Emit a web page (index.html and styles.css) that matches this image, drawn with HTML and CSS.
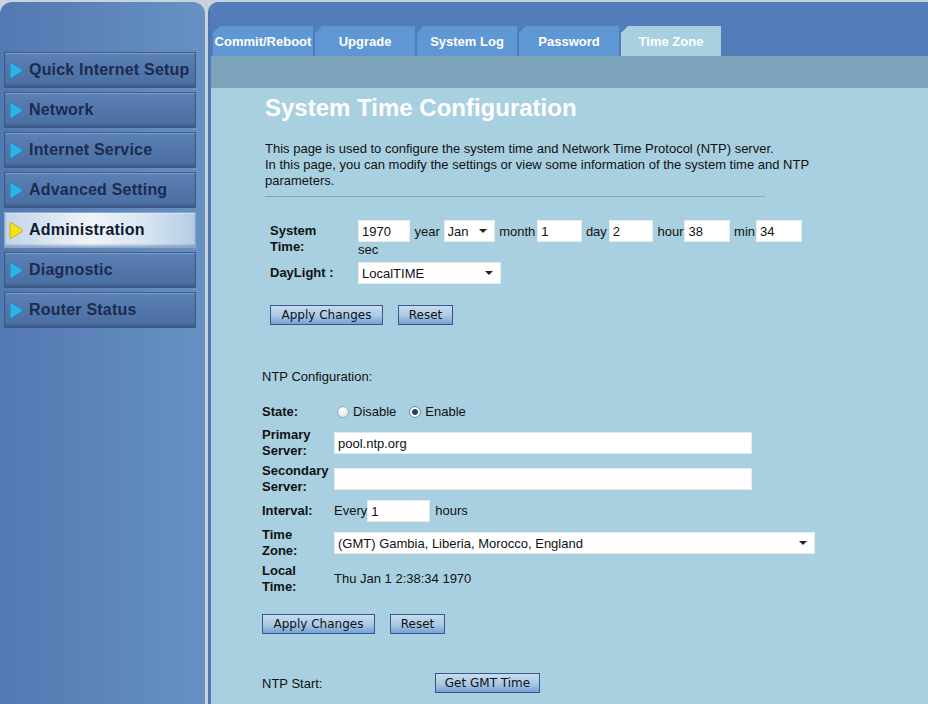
FILE: index.html
```html
<!DOCTYPE html>
<html lang="en">
<head>
  <meta charset="UTF-8">
  <title>System Time Configuration</title>
  <link rel="stylesheet" href="styles.css">
</head>
<body>
  <div class="page">
    <aside class="sidebar">
      <ul class="menu">
        <li class="menu-item"><svg class="arrow" viewBox="0 0 14 17"><path d="M1 1.5 Q1 0 2.4 0.8 L13 7.4 Q14 8.5 13 9.6 L2.4 16.2 Q1 17 1 15.5 Z"/></svg>Quick Internet Setup</li>
        <li class="menu-item"><svg class="arrow" viewBox="0 0 14 17"><path d="M1 1.5 Q1 0 2.4 0.8 L13 7.4 Q14 8.5 13 9.6 L2.4 16.2 Q1 17 1 15.5 Z"/></svg>Network</li>
        <li class="menu-item"><svg class="arrow" viewBox="0 0 14 17"><path d="M1 1.5 Q1 0 2.4 0.8 L13 7.4 Q14 8.5 13 9.6 L2.4 16.2 Q1 17 1 15.5 Z"/></svg>Internet Service</li>
        <li class="menu-item"><svg class="arrow" viewBox="0 0 14 17"><path d="M1 1.5 Q1 0 2.4 0.8 L13 7.4 Q14 8.5 13 9.6 L2.4 16.2 Q1 17 1 15.5 Z"/></svg>Advanced Setting</li>
        <li class="menu-item active"><svg class="arrow" viewBox="0 0 14 17"><path d="M1 1.5 Q1 0 2.4 0.8 L13 7.4 Q14 8.5 13 9.6 L2.4 16.2 Q1 17 1 15.5 Z"/></svg>Administration</li>
        <li class="menu-item"><svg class="arrow" viewBox="0 0 14 17"><path d="M1 1.5 Q1 0 2.4 0.8 L13 7.4 Q14 8.5 13 9.6 L2.4 16.2 Q1 17 1 15.5 Z"/></svg>Diagnostic</li>
        <li class="menu-item"><svg class="arrow" viewBox="0 0 14 17"><path d="M1 1.5 Q1 0 2.4 0.8 L13 7.4 Q14 8.5 13 9.6 L2.4 16.2 Q1 17 1 15.5 Z"/></svg>Router Status</li>
      </ul>
    </aside>

    <div class="main">
      <div class="tabbar">
        <a class="tab">Commit/Reboot</a>
        <a class="tab">Upgrade</a>
        <a class="tab">System Log</a>
        <a class="tab">Password</a>
        <a class="tab active">Time Zone</a>
      </div>
      <div class="subbar"></div>

      <div class="content">
        <h1>System Time Configuration</h1>
        <p class="desc">This page is used to configure the system time and Network Time Protocol (NTP) server.<br>
          In this page, you can modify the settings or view some information of the system time and NTP parameters.</p>
        <hr class="divider">

        <form class="time-form">
          <div class="grid grid-time">
            <div class="label">System<br>Time:</div>
            <div class="field time-field">
              <input class="box w-year" type="text" value="1970"> year <span class="dropdown w-month"><select class="box"><option>Jan</option></select></span> month<input class="box w-day" type="text" value="1"> day<input class="box w-hour" type="text" value="2"> hour<input class="box w-min" type="text" value="38"> min<input class="box w-sec" type="text" value="34"> sec
            </div>

            <div class="label">DayLight :</div>
            <div class="field">
              <span class="dropdown w-daylight"><select class="box"><option>LocalTIME</option></select></span>
            </div>
          </div>

          <div class="buttons">
            <button type="button" class="btn w-apply">Apply Changes</button>
            <button type="button" class="btn w-reset">Reset</button>
          </div>
        </form>

        <form class="ntp-form">
          <div class="section-title">NTP Configuration:</div>

          <div class="grid grid-ntp">
            <div class="label">State:</div>
            <div class="field radios">
              <label class="radio"><span class="dot"></span>Disable</label>
              <label class="radio"><span class="dot on"></span>Enable</label>
            </div>

            <div class="label">Primary<br>Server:</div>
            <div class="field"><input class="box w-server" type="text" value="pool.ntp.org"></div>

            <div class="label">Secondary<br>Server:</div>
            <div class="field"><input class="box w-server" type="text" value=""></div>

            <div class="label">Interval:</div>
            <div class="field interval">Every<input class="box w-interval" type="text" value="1"><span>hours</span></div>

            <div class="label">Time<br>Zone:</div>
            <div class="field">
              <span class="dropdown w-zone"><select class="box"><option>(GMT) Gambia, Liberia, Morocco, England</option></select></span>
            </div>

            <div class="label">Local<br>Time:</div>
            <div class="field">Thu Jan 1 2:38:34 1970</div>
          </div>

          <div class="buttons">
            <button type="button" class="btn w-apply">Apply Changes</button>
            <button type="button" class="btn w-reset">Reset</button>
          </div>

          <div class="ntp-start">
            <span class="start-label">NTP Start:</span>
            <button type="button" class="btn w-gmt">Get GMT Time</button>
          </div>
        </form>
      </div>
    </div>
  </div>
</body>
</html>
```

FILE: styles.css
```css
body {
  margin: 0;
  background: #c9d3de;
  font-family: "Liberation Sans", Arial, sans-serif;
  font-size: 13px;
  color: #111;
}

.page {
  display: flex;
  gap: 3px;
  padding-top: 2px;
  height: 702px;
  overflow: hidden;
}

/* left menu */
.sidebar {
  width: 205px;
  flex: none;
  padding-top: 50px;
  background: linear-gradient(to right, #5279b2, #6791c3);
  border-radius: 12px 12px 0 0;
}

.menu {
  list-style: none;
  margin: 0;
  padding: 0 0 0 4px;
}

.menu-item {
  box-sizing: border-box;
  width: 192px;
  height: 36px;
  margin-bottom: 4px;
  padding-left: 4px;
  display: flex;
  align-items: center;
  gap: 6px;
  border: 1px solid #3d5a8a;
  background: linear-gradient(#5b80b5, #4b6ea1);
  box-shadow: inset 0 1px 0 rgba(255, 255, 255, 0.25), inset 0 -2px 2px rgba(30, 50, 90, 0.3);
  font-size: 16px;
  font-weight: bold;
  letter-spacing: 0.2px;
  color: #1b2b4f;
}

.menu-item.active {
  background: linear-gradient(to right, #c3d4ea, #eef4fa 45%, #d6e4f2 75%, #b4cce6);
  border-color: #8fa8c8;
  color: #101a30;
}

.arrow {
  width: 14px;
  height: 17px;
  flex: none;
  fill: #2bb3e8;
  stroke: #1a7fb8;
  stroke-width: 0.8;
}

.active .arrow {
  fill: #f2e21a;
  stroke: #b9a400;
}

/* right panel */
.main {
  flex: 1;
  display: flex;
  flex-direction: column;
  background: #a9d0e0;
  border-left: 3px solid #4f78b0;
  border-radius: 10px 0 0 0;
  overflow: hidden;
}

.tabbar {
  height: 54px;
  flex: none;
  display: flex;
  align-items: flex-end;
  gap: 2px;
  padding-left: 2px;
  background: #537dba;
}

.tab {
  width: 100px;
  height: 30px;
  display: flex;
  align-items: center;
  justify-content: center;
  background: #5f97d5;
  color: #fff;
  font-weight: bold;
  font-size: 13px;
  clip-path: polygon(7px 0, 100% 0, 100% 100%, 0 100%, 0 7px);
}

.tab.active {
  background: #a9d0e0;
}

.subbar {
  height: 32px;
  flex: none;
  background: #7ba3b9;
}

.content {
  padding-left: 51px;
}

.content h1 {
  margin: 6px 0 0 3px;
  font-size: 24px;
  line-height: 28px;
  color: #fff;
}

.desc {
  width: 552px;
  margin: 19px 0 0 3px;
  line-height: 16px;
}

.divider {
  width: 500px;
  margin: 7px 0 0 3px;
  border: none;
  border-top: 1px solid #8ba4b4;
}

/* forms */
.grid {
  display: grid;
  row-gap: 4px;
  align-items: center;
}

.grid-time {
  grid-template-columns: 88px 452px;
}

.grid-ntp {
  grid-template-columns: 72px 500px;
  margin-top: 16px;
}

.label {
  font-weight: bold;
  line-height: 16px;
}

.field {
  line-height: 16px;
}

.time-form {
  margin: 23px 0 0 8px;
}

.box {
  box-sizing: border-box;
  height: 22px;
  padding: 0 3px;
  border: 1px solid #e4ecf0;
  background: #fff;
  font-family: "Liberation Sans", Arial, sans-serif;
  font-size: 13px;
  color: #111;
  vertical-align: baseline;
}

.w-year { width: 52px; margin-right: 1px; }
.w-day { width: 45px; margin-left: 2px; }
.w-hour { width: 44px; margin-left: 2px; margin-right: 1px; }
.w-min { width: 46px; margin-left: 1px; }
.w-sec { width: 46px; margin-left: 1px; }
.w-server { width: 418px; }
.w-interval { width: 63px; margin: 0 5px 0 0; }

.dropdown {
  position: relative;
  display: inline-block;
}

.dropdown select {
  width: 100%;
  appearance: none;
  -webkit-appearance: none;
  border-radius: 0;
  outline: none;
}

.dropdown::after {
  content: "";
  position: absolute;
  right: 8px;
  top: 9px;
  border-left: 4px solid transparent;
  border-right: 4px solid transparent;
  border-top: 4px solid #222;
}

.w-month { width: 51px; margin-right: 1px; }
.w-daylight { width: 143px; }
.w-zone { width: 481px; }

.buttons {
  display: flex;
  gap: 15px;
  margin-top: 21px;
}

.btn {
  box-sizing: border-box;
  height: 20px;
  padding: 0;
  border: 1px solid #3c5786;
  background: linear-gradient(#c8dcf0, #a9c8e6 55%, #74a2d6);
  font-family: "DejaVu Sans", Verdana, sans-serif;
  font-size: 12px;
  color: #111;
}

.w-apply { width: 113px; }
.w-reset { width: 55px; }
.w-gmt { width: 105px; }

.section-title {
  margin-top: 44px;
  line-height: 16px;
}

.radios {
  display: flex;
  align-items: center;
  gap: 13px;
  height: 22px;
  padding-left: 3px;
}

.radio {
  display: flex;
  align-items: center;
  gap: 4px;
}

.dot {
  box-sizing: border-box;
  width: 12px;
  height: 12px;
  border-radius: 50%;
  border: 1px solid #9aa6b0;
  background: radial-gradient(circle at 40% 35%, #fff, #d8dde2);
}

.dot.on {
  background: radial-gradient(circle, #1f3f78 0 2.5px, #fff 3.5px, #dce2e8);
  border-color: #7a8a9c;
}

.interval {
  display: flex;
  align-items: center;
  height: 24px;
}

.ntp-form .buttons {
  margin-top: 19px;
}

.ntp-start {
  display: flex;
  align-items: center;
  margin-top: 39px;
}

.start-label {
  width: 173px;
}
```
